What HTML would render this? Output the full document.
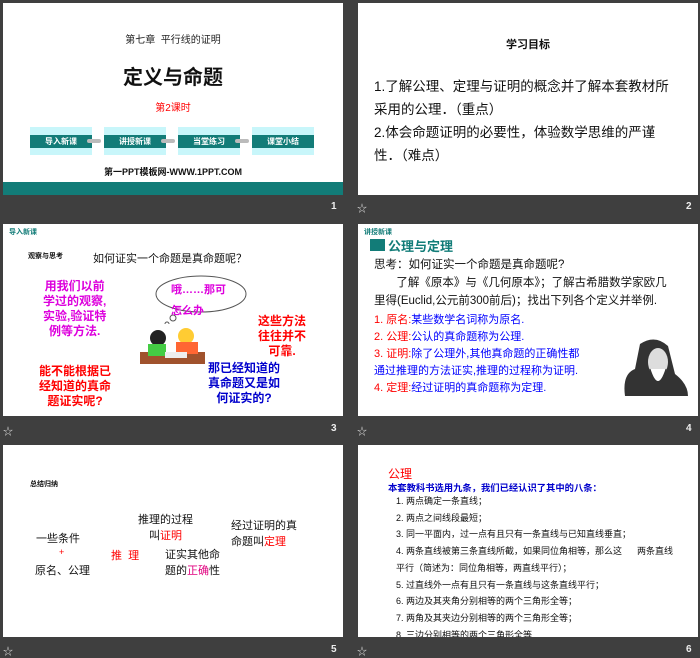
<!DOCTYPE html>
<html><head><meta charset="utf-8"><style>
*{margin:0;padding:0;box-sizing:border-box}
body{width:700px;height:655px;background:#3f3f3f;position:relative;overflow:hidden;font-family:"Liberation Sans","Noto Sans CJK SC",sans-serif;}
.s{position:absolute;background:#fff;width:340px;height:192px;overflow:hidden}
.a{position:absolute;white-space:nowrap}
.n{position:absolute;color:#eee;font-size:10px;font-weight:bold}
.st{position:absolute;color:#ddd;font-size:10px}
.btn{position:absolute;top:124px;width:62px;height:28px;background:#c8f6fa}
.btn div{position:absolute;top:8px;left:0;width:62px;height:13px;background:#127c78;color:#fff;font-size:8px;font-weight:bold;text-align:center;line-height:13px}
.cn{position:absolute;top:136px;width:14px;height:4px;background:#bbb;border-radius:2px}
</style></head><body>

<div class="s" style="left:3px;top:3px">
<div class="a" style="left:0;width:340px;text-align:center;top:28px;font-size:10px;color:#222">第七章&nbsp; 平行线的证明</div>
<div class="a" style="left:0;width:340px;text-align:center;top:58px;font-size:20px;font-weight:bold;color:#111">定义与命题</div>
<div class="a" style="left:0;width:340px;text-align:center;top:96px;font-size:10px;color:#f00">第2课时</div>
<div class="btn" style="left:27px"><div>导入新课</div></div>
<div class="btn" style="left:101px"><div>讲授新课</div></div>
<div class="btn" style="left:175px"><div>当堂练习</div></div>
<div class="btn" style="left:249px"><div>课堂小结</div></div>
<div class="cn" style="left:84px"></div><div class="cn" style="left:158px"></div><div class="cn" style="left:232px"></div>
<div class="a" style="left:0;width:340px;text-align:center;top:162px;font-size:9px;font-weight:bold;color:#111">第一PPT模板网-WWW.1PPT.COM</div>
<div class="a" style="left:0;top:179px;width:340px;height:13px;background:#127c78"></div>
</div>
<div class="n" style="left:331px;top:201px">1</div>

<div class="s" style="left:358px;top:3px">
<div class="a" style="left:0;width:340px;text-align:center;top:33px;font-size:11px;font-weight:bold;color:#111">学习目标</div>
<div class="a" style="left:16px;top:72px;font-size:13.5px;color:#111;line-height:23px">1.了解公理、定理与证明的概念并了解本套教材所<br>采用的公理．（重点）<br>2.体会命题证明的必要性，体验数学思维的严谨<br>性．（难点）</div>
</div>
<div class="n" style="left:686px;top:201px">2</div>
<div class="st" style="left:357px;top:200px">☆</div>

<div class="s" style="left:3px;top:224px">
<div class="a" style="left:6px;top:3px;font-size:7px;font-weight:bold;color:#127c78">导入新课</div>
<div class="a" style="left:25px;top:27px;font-size:7px;font-weight:bold;color:#111">观察与思考</div>
<div class="a" style="left:90px;top:26px;font-size:11px;color:#111">如何证实一个命题是真命题呢？</div>
<div class="a" style="left:40px;top:55px;font-size:12px;font-weight:bold;color:#d0d;line-height:15px;text-align:center">用我们以前<br>学过的观察,<br>实验,验证特<br>例等方法.</div>
<svg class="a" style="left:148px;top:50px" width="100" height="50"><ellipse cx="50" cy="20" rx="45" ry="18" fill="#fff" stroke="#555"/><circle cx="22" cy="44" r="3" fill="#fff" stroke="#555"/><circle cx="16" cy="50" r="2" fill="#fff" stroke="#555"/></svg>
<div class="a" style="left:168px;top:56px;font-size:11px;font-weight:bold;color:#d0d;line-height:21px">哦……那可<br>怎么办</div>
<svg class="a" style="left:137px;top:100px" width="70" height="40"><rect x="0" y="28" width="65" height="12" fill="#a0522d"/><circle cx="18" cy="14" r="8" fill="#222"/><rect x="8" y="20" width="18" height="12" fill="#4c4"/><circle cx="46" cy="12" r="8" fill="#fc3"/><rect x="36" y="18" width="22" height="12" fill="#f63"/><rect x="25" y="28" width="22" height="6" fill="#eee"/></svg>
<div class="a" style="left:255px;top:90px;font-size:12px;font-weight:bold;color:#f00;line-height:15px;text-align:center">这些方法<br>往往并不<br>可靠.</div>
<div class="a" style="left:36px;top:140px;font-size:12px;font-weight:bold;color:#f00;line-height:15px;text-align:center">能不能根据已<br>经知道的真命<br>题证实呢?</div>
<div class="a" style="left:205px;top:137px;font-size:12px;font-weight:bold;color:#00c;line-height:15px;text-align:center">那已经知道的<br>真命题又是如<br>何证实的?</div>
</div>
<div class="n" style="left:331px;top:423px">3</div>
<div class="st" style="left:3px;top:423px">☆</div>

<div class="s" style="left:358px;top:224px">
<div class="a" style="left:6px;top:3px;font-size:7px;font-weight:bold;color:#127c78">讲授新课</div>
<div class="a" style="left:12px;top:15px;width:15px;height:12px;background:#127c78"></div>
<div class="a" style="left:30px;top:12px;font-size:13px;font-weight:bold;color:#127c78">公理与定理</div>
<div class="a" style="left:16px;top:32px;font-size:11.5px;color:#111;line-height:18px">思考：如何证实一个命题是真命题呢?<br>&nbsp; &nbsp; &nbsp; &nbsp;了解《原本》与《几何原本》；了解古希腊数学家欧几<br>里得(Euclid,公元前300前后)；找出下列各个定义并举例.</div>
<div class="a" style="left:16px;top:88px;font-size:11px;color:#00f;line-height:17px"><span style="color:#f00">1. 原名:</span>某些数学名词称为原名.<br><span style="color:#f00">2. 公理:</span>公认的真命题称为公理.<br><span style="color:#f00">3. 证明:</span>除了公理外,其他真命题的正确性都<br>通过推理的方法证实,推理的过程称为证明.<br><span style="color:#f00">4. 定理:</span>经过证明的真命题称为定理.</div>
<svg class="a" style="left:262px;top:110px" width="70" height="65"><path d="M20 10 Q35 0 48 12 L55 40 Q68 50 68 62 L5 62 Q2 40 15 35 Z" fill="#333"/><ellipse cx="38" cy="28" rx="10" ry="14" fill="#ddd"/><path d="M30 35 Q38 60 46 35" fill="#fff" stroke="#333"/></svg>
</div>
<div class="n" style="left:686px;top:423px">4</div>
<div class="st" style="left:357px;top:423px">☆</div>

<div class="s" style="left:3px;top:445px">
<div class="a" style="left:27px;top:34px;font-size:7px;font-weight:bold;color:#111">总结归纳</div>
<div class="a" style="left:33px;top:85px;font-size:11px;color:#111">一些条件</div>
<div class="a" style="left:56px;top:102px;font-size:9px;color:#f00">+</div>
<div class="a" style="left:32px;top:117px;font-size:11px;color:#111">原名、公理</div>
<div class="a" style="left:108px;top:102px;font-size:11px;color:#f00">推&nbsp; 理</div>
<div class="a" style="left:135px;top:67px;font-size:11px;color:#111;line-height:16px;text-align:center">推理的过程<br>叫<span style="color:#f00">证明</span></div>
<div class="a" style="left:162px;top:102px;font-size:11px;color:#111;line-height:16px">证实其他命<br>题的<span style="color:#e0007f">正确</span>性</div>
<div class="a" style="left:228px;top:73px;font-size:11px;color:#111;line-height:16px">经过证明的真<br>命题叫<span style="color:#f00">定理</span></div>
</div>
<div class="n" style="left:331px;top:644px">5</div>
<div class="st" style="left:3px;top:643px">☆</div>

<div class="s" style="left:358px;top:445px">
<div class="a" style="left:30px;top:20px;font-size:12px;color:#f00">公理</div>
<div class="a" style="left:30px;top:35px;font-size:9.3px;font-weight:bold;color:#00c">本套教科书选用九条，我们已经认识了其中的八条：</div>
<div class="a" style="left:38px;top:48px;font-size:9px;color:#111;line-height:16.7px">1. 两点确定一条直线；<br>2. 两点之间线段最短；<br>3. 同一平面内，过一点有且只有一条直线与已知直线垂直；<br>4. 两条直线被第三条直线所截，如果同位角相等，那么这&nbsp; &nbsp; &nbsp; 两条直线<br>平行（简述为：同位角相等，两直线平行）；<br>5. 过直线外一点有且只有一条直线与这条直线平行；<br>6. 两边及其夹角分别相等的两个三角形全等；<br>7. 两角及其夹边分别相等的两个三角形全等；<br>8. 三边分别相等的两个三角形全等.</div>
</div>
<div class="n" style="left:686px;top:644px">6</div>
<div class="st" style="left:357px;top:643px">☆</div>
</body></html>
